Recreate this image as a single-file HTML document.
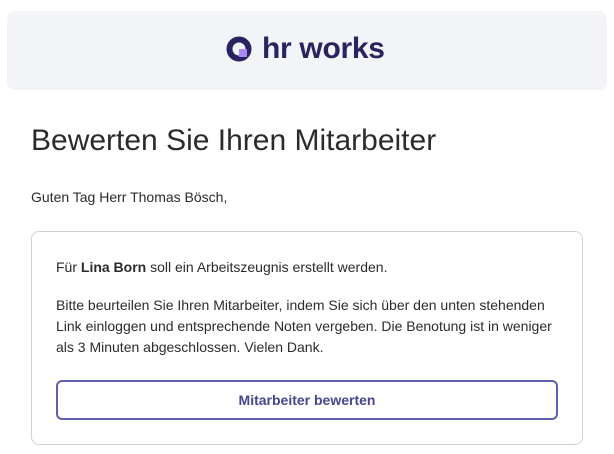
<!DOCTYPE html>
<html><head><meta charset="utf-8"><style>
body{margin:0;width:614px;height:454px;background:#fff;font-family:"Liberation Sans",sans-serif;color:#2b2b2b;position:relative;overflow:hidden}
.hdr{position:absolute;left:7px;top:11px;width:600px;height:79px;background:#f3f4f7;border-radius:8px}
.logo{position:absolute;left:226px;top:33px;height:32px;display:flex;align-items:center}
.logo span{font-weight:bold;font-size:30px;color:#29235f;margin-left:10px;letter-spacing:-0.3px;line-height:32px}
h1{position:absolute;left:31px;top:124px;margin:0;font-weight:normal;font-size:30px;color:#2b2b2b}
.g{position:absolute;left:31px;top:189px;font-size:14px}
.card{position:absolute;left:31px;top:231px;width:550px;height:212px;border:1px solid #d2d2d6;border-radius:8px}
.t{position:absolute;left:24px;font-size:14px;line-height:21px;width:515px}
.btn{position:absolute;left:24px;top:148px;width:498px;height:36px;border:2px solid #5e61a8;border-radius:6px;text-align:center;line-height:36px;font-weight:bold;font-size:14px;color:#45468f}
</style></head><body>
<div class="hdr"></div>
<div class="logo">
<svg width="26" height="26" viewBox="0 0 26 26"><circle cx="13" cy="13" r="9.5" fill="none" stroke="#29235f" stroke-width="6"/><rect x="13" y="13" width="8" height="8" fill="#a98bf2"/></svg>
<span>hr works</span></div>
<h1>Bewerten Sie Ihren Mitarbeiter</h1>
<div class="g">Guten Tag Herr Thomas Bösch,</div>
<div class="card">
<div class="t" style="top:25px">Für <b>Lina Born</b> soll ein Arbeitszeugnis erstellt werden.</div>
<div class="t" style="top:63px">Bitte beurteilen Sie Ihren Mitarbeiter, indem Sie sich über den unten stehenden Link einloggen und entsprechende Noten vergeben. Die Benotung ist in weniger als 3 Minuten abgeschlossen. Vielen Dank.</div>
<div class="btn">Mitarbeiter bewerten</div>
</div>
</body></html>
